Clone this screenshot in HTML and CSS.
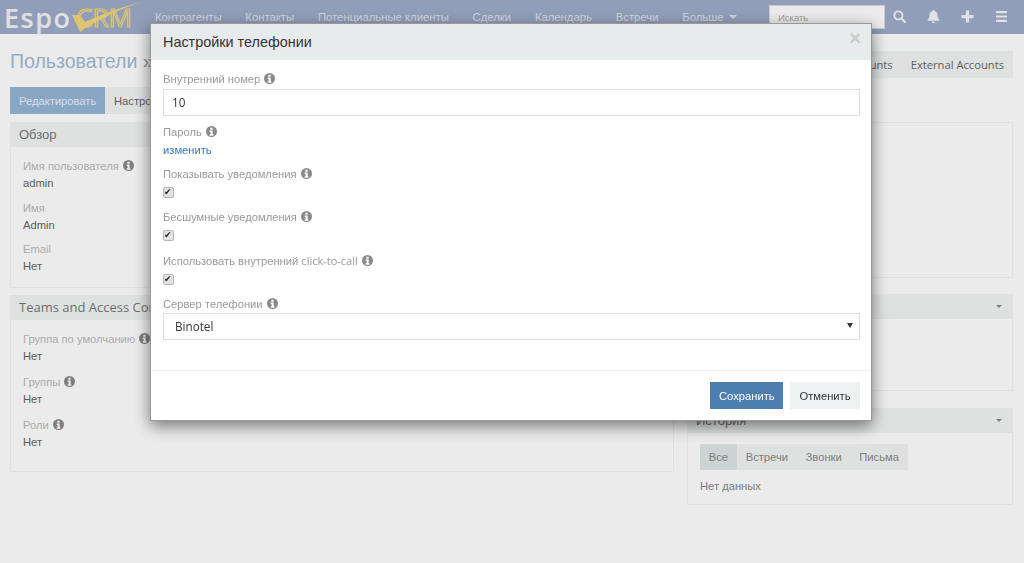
FILE: index.html
```html
<!DOCTYPE html>
<html lang="ru">
<head>
  <meta charset="UTF-8" />
  <title>Настройки телефонии</title>
  <link rel="stylesheet" href="styles.css">
</head>
<body>

<svg class="icon-defs" width="0" height="0">
  <symbol id="info" viewBox="0 0 24 24">
    <path fill-rule="evenodd" d="M12 0a12 12 0 1 0 0 24a12 12 0 0 0 0-24zM9.500 4h5v4h-5zM8 10h6.500v8H16v3H8v-3h2v-5H8z"/>
  </symbol>
</svg>

<nav class="navbar">
  <a href="#" class="logo">
    <span class="logo-espo">Espo</span><span class="logo-crm">CRM</span>
    <svg class="logo-swoosh" viewBox="0 0 70 34"><path d="M0 14 L8 31 Q30 15 69 1 Q36 10 13 21 L8 14z"/></svg>
  </a>
  <div class="nav-links">
    <a href="#" class="nav-item">Контрагенты</a>
    <a href="#" class="nav-item">Контакты</a>
    <a href="#" class="nav-item">Потенциальные клиенты</a>
    <a href="#" class="nav-item">Сделки</a>
    <a href="#" class="nav-item">Календарь</a>
    <a href="#" class="nav-item">Встречи</a>
    <a href="#" class="nav-item">Больше <span class="caret"></span></a>
  </div>
  <div class="nav-right">
    <input class="nav-search" type="text" placeholder="Искать" />
    <div class="nav-icons">
      <svg viewBox="0 0 24 24" width="13" height="13"><circle cx="10" cy="10" r="7.500" fill="none" stroke-width="3.500"/><path d="M15.500 15.500L22 22" fill="none" stroke-width="4" stroke-linecap="round"/></svg>
      <svg viewBox="0 0 24 24" width="13" height="13"><path class="solid" d="M12 0a2 2 0 0 1 2 2.200C18 3 19.500 6 19.500 10c0 4 1.500 6 3.500 8v2H1v-2c2-2 3.500-4 3.500-8c0-4 1.500-7 5.500-7.800A2 2 0 0 1 12 0zM9 21.500h6a3 3 0 0 1-6 0z"/></svg>
      <svg viewBox="0 0 24 24" width="13" height="13"><path class="solid" d="M9 1h6v8h8v6h-8v8H9v-8H1V9h8z"/></svg>
      <svg viewBox="0 0 24 24" width="13" height="13"><path class="solid" d="M2 2h20v4H2zM2 10h20v4H2zM2 18h20v4H2z"/></svg>
    </div>
  </div>
</nav>

<main class="page">
  <div class="page-head">
    <h1 class="page-title">Пользователи <span class="sep">»</span> admin</h1>
    <div class="head-tabs">
      <a href="#" class="os">Email Accounts</a>
      <a href="#" class="os">External Accounts</a>
    </div>
  </div>

  <div class="actions">
    <button class="btn btn-edit">Редактировать</button>
    <button class="btn">Настройки</button>
  </div>

  <div class="columns">
    <div class="col-left">
      <section class="panel panel-overview">
        <h4 class="panel-head">Обзор</h4>
        <div class="panel-body">
          <div class="field">
            <label>Имя пользователя <svg class="info"><use href="#info"/></svg></label>
            <div class="value">admin</div>
          </div>
          <div class="field">
            <label>Имя</label>
            <div class="value">Admin</div>
          </div>
          <div class="field">
            <label>Email</label>
            <div class="value">Нет</div>
          </div>
        </div>
      </section>

      <section class="panel panel-teams">
        <h4 class="panel-head os">Teams and Access Control</h4>
        <div class="panel-body">
          <div class="field">
            <label>Группа по умолчанию <svg class="info"><use href="#info"/></svg></label>
            <div class="value">Нет</div>
          </div>
          <div class="field">
            <label>Группы <svg class="info"><use href="#info"/></svg></label>
            <div class="value">Нет</div>
          </div>
          <div class="field">
            <label>Роли <svg class="info"><use href="#info"/></svg></label>
            <div class="value">Нет</div>
          </div>
        </div>
      </section>
    </div>

    <div class="col-right">
      <section class="panel panel-blank"></section>

      <section class="panel panel-side">
        <h4 class="panel-head">Активности <span class="caret panel-caret"></span></h4>
      </section>

      <section class="panel panel-history">
        <h4 class="panel-head">История <span class="caret panel-caret"></span></h4>
        <div class="panel-body">
          <div class="filter-tabs">
            <a href="#" class="active">Все</a>
            <a href="#">Встречи</a>
            <a href="#">Звонки</a>
            <a href="#">Письма</a>
          </div>
          <div class="no-data">Нет данных</div>
        </div>
      </section>
    </div>
  </div>
</main>

<div class="backdrop"></div>

<div class="modal">
  <header class="modal-head">
    <h3>Настройки телефонии</h3>
    <span class="modal-close">×</span>
  </header>
  <div class="modal-body">
    <div class="form-row row-ext">
      <label>Внутренний номер <svg class="info"><use href="#info"/></svg></label>
      <input class="form-control os" type="text" value="10" />
    </div>
    <div class="form-row row-pass">
      <label>Пароль <svg class="info"><use href="#info"/></svg></label>
      <a href="#" class="change-link">изменить</a>
    </div>
    <div class="form-row row-check">
      <label>Показывать уведомления <svg class="info"><use href="#info"/></svg></label>
      <input type="checkbox" class="check" checked />
    </div>
    <div class="form-row row-check">
      <label>Бесшумные уведомления <svg class="info"><use href="#info"/></svg></label>
      <input type="checkbox" class="check" checked />
    </div>
    <div class="form-row row-check">
      <label>Использовать внутренний <span class="os-small">click-to-call</span> <svg class="info"><use href="#info"/></svg></label>
      <input type="checkbox" class="check" checked />
    </div>
    <div class="form-row row-server">
      <label>Сервер телефонии <svg class="info"><use href="#info"/></svg></label>
      <div class="select-wrap">
        <select class="form-control os"><option>Binotel</option></select>
      </div>
    </div>
  </div>
  <footer class="modal-foot">
    <button class="btn btn-save">Сохранить</button>
    <button class="btn btn-cancel">Отменить</button>
  </footer>
</div>

</body>
</html>
```

FILE: styles.css
```css
html, body {
  height: 100%;
}

body {
  font-family: 'Liberation Sans', Arial, sans-serif;
  font-size: 11.2px;
  background: #fff;
  color: #333;
  margin: 0;
  padding: 0;
  overflow: hidden;
}

a {
  text-decoration: none;
}

.os, .form-control {
  font-family: 'Open Sans', sans-serif;
}

.os-small {
  font-family: 'Open Sans', sans-serif;
  font-size: 11px;
}

.icon-defs {
  position: absolute;
}

.info {
  width: 11px;
  height: 11px;
  fill: #8a8a8a;
  vertical-align: -1px;
  margin-left: 1px;
}

/* navbar */
.navbar {
  display: flex;
  align-items: flex-start;
  height: 34px;
  background: #9eacc9;
  color: #fff;
}

.logo {
  position: relative;
  display: block;
  width: 155px;
  height: 34px;
  flex: none;
}

.logo-espo {
  position: absolute;
  left: 4px;
  top: 1px;
  font-family: 'Open Sans', sans-serif;
  font-size: 27px;
  font-weight: 600;
  line-height: 34px;
  letter-spacing: 1.5px;
  color: #f4f4f4;
}

.logo-crm {
  position: absolute;
  left: 76px;
  top: 0;
  font-family: 'Open Sans', sans-serif;
  font-size: 26px;
  line-height: 34px;
  color: transparent;
  -webkit-text-stroke: 1.2px #f0d57a;
}

.logo-swoosh {
  position: absolute;
  left: 72px;
  top: 1px;
  width: 70px;
  height: 34px;
  fill: #f0d57a;
}

.nav-links {
  display: flex;
  gap: 23.800px;
  flex: none;
  width: 614px;
}

.nav-item {
  color: #fff;
  font-size: 11.3px;
  line-height: 35px;
  opacity: 0.7;
}

.caret {
  display: inline-block;
  width: 0;
  height: 0;
  border-top: 4px solid currentColor;
  border-left: 4px solid transparent;
  border-right: 4px solid transparent;
  vertical-align: 2px;
  margin-left: 2px;
}

.nav-right {
  display: flex;
  padding-top: 5px;
}

.nav-search {
  width: 116px;
  height: 24px;
  box-sizing: border-box;
  padding: 0 8px;
  border: 1px solid #ddd;
  background: #fff;
  font-family: inherit;
  font-size: 9.500px;
}

.nav-search::placeholder {
  color: #aaa;
}

.nav-icons {
  display: flex;
  gap: 21px;
  padding: 5px 0 0 8px;
  opacity: 0.9;
}

.nav-icons svg {
  stroke: #fff;
  fill: #fff;
}

.nav-icons svg .solid {
  stroke: none;
}

/* page */
.page {
  padding: 0 11px 0 10px;
}

.page-head {
  display: flex;
  justify-content: space-between;
  padding-top: 17px;
  height: 36px;
}

.page-title {
  margin: 0;
  font-size: 19.500px;
  font-weight: normal;
  line-height: 20px;
  color: #a0bcd8;
}

.sep {
  color: #999;
}

.head-tabs {
  display: flex;
  height: 27px;
  background: #f2f5f5;
}

.head-tabs a {
  padding: 0 9px;
  line-height: 27px;
  font-size: 11.200px;
  color: #666;
}

.actions {
  display: flex;
  height: 35px;
}

.btn {
  height: 27px;
  padding: 0 9px;
  border: none;
  background: #f2f5f5;
  font-family: inherit;
  font-size: 11.200px;
  color: #666;
}

.btn-edit {
  background: #94b6d6;
  color: #eef;
  width: 95px;
}

.columns {
  display: flex;
  gap: 13px;
}

.col-left {
  width: 664px;
  flex: none;
}

.col-right {
  flex: 1;
}

.panel {
  box-sizing: border-box;
  border: 1px solid #f4f4f4;
  border-top: none;
  background: #fff;
  margin-bottom: 7px;
}

.panel-head {
  position: relative;
  margin: 0;
  height: 25px;
  padding: 0 8px;
  background: #f2f5f5;
  font-size: 13px;
  font-weight: normal;
  line-height: 25px;
  color: #777;
}

.panel-caret {
  position: absolute;
  right: 10px;
  top: 11px;
  border-width: 3px 3px 0;
  color: #888;
}

.panel-body {
  padding: 11px 12px;
}

.panel-overview {
  height: 166px;
}

.panel-overview .field {
  height: 41.500px;
}

.panel-teams {
  height: 177px;
}

.panel-blank {
  height: 156px;
  border-top: 1px solid #f4f4f4;
  margin-bottom: 16px;
}

.panel-side {
  height: 97px;
  margin-bottom: 17px;
}

.panel-history {
  height: 97px;
}

.field {
  height: 43px;
}

.field label {
  display: block;
  line-height: 16px;
  color: #bbb;
}

.field .value {
  line-height: 18px;
  color: #666;
}

.filter-tabs {
  display: inline-flex;
  background: #f2f5f5;
  height: 26px;
  line-height: 26px;
}

.filter-tabs a {
  padding: 0 8.800px;
  color: #888;
}

.filter-tabs a.active {
  background: #dfe6e6;
}

.no-data {
  margin-top: 8px;
  line-height: 16px;
  color: #888;
}

/* modal */
.backdrop {
  position: fixed;
  inset: 0;
  background: rgba(0, 0, 0, 0.08);
}

.modal {
  position: fixed;
  left: 150px;
  top: 23px;
  box-sizing: border-box;
  width: 722px;
  height: 398px;
  display: flex;
  flex-direction: column;
  background: #fff;
  border: 1px solid #999;
  box-shadow: 0 5px 15px rgba(0, 0, 0, 0.5);
}

.modal-head {
  display: flex;
  justify-content: space-between;
  height: 36px;
  flex: none;
  padding: 0 10px 0 12px;
  background: #e8ebec;
}

.modal-head h3 {
  margin: 0;
  font-size: 14.400px;
  font-weight: normal;
  line-height: 36px;
  color: #333;
}

.modal-close {
  font-size: 20px;
  line-height: 28px;
  font-weight: bold;
  color: #ccc;
}

.modal-body {
  flex: 1;
  padding: 11px 11px 0 12px;
}

.form-row label {
  display: block;
  line-height: 16px;
  color: #999;
}

.form-row {
  margin-bottom: 9px;
}

.form-control {
  display: block;
  width: 100%;
  height: 27px;
  box-sizing: border-box;
  padding: 0 11px;
  border: 1px solid #ddd;
  background: #fff;
  font-size: 11.700px;
  color: #333;
  appearance: none;
  border-radius: 0;
}

input.form-control {
  padding: 0 8px 2px;
}

.row-ext {
  margin-bottom: 8px;
}

.row-ext label {
  margin-bottom: 2px;
}

.row-pass {
  margin-bottom: 7px;
}

.row-pass label, .row-server label {
  margin-bottom: 1px;
}

.change-link {
  display: block;
  line-height: 18px;
  color: #337ab7;
}

.row-check {
  height: 34.330px;
}

.check {
  display: block;
  appearance: none;
  position: relative;
  box-sizing: border-box;
  width: 11px;
  height: 11px;
  margin: 5px 0 0 0;
  border: 1px solid #b5b5b5;
  border-radius: 2px;
  background: #e2e2e2;
}

.check:checked::before {
  content: "✔";
  position: absolute;
  left: 0;
  top: -1px;
  font-family: 'DejaVu Sans', sans-serif;
  font-size: 9px;
  line-height: 11px;
  color: #222;
}

.select-wrap {
  position: relative;
}

.select-wrap::after {
  content: "";
  position: absolute;
  right: 7px;
  top: 10px;
  border-top: 5px solid #333;
  border-left: 3px solid transparent;
  border-right: 3px solid transparent;
}

.modal-foot {
  display: flex;
  justify-content: flex-end;
  gap: 7px;
  box-sizing: border-box;
  height: 50px;
  flex: none;
  padding: 11px 11px 0 0;
  border-top: 1px solid #eee;
}

.btn-save {
  width: 73px;
  background: #4d7eb0;
  color: #fff;
}

.btn-cancel {
  width: 70px;
  background: #eef1f2;
  color: #333;
}
```
